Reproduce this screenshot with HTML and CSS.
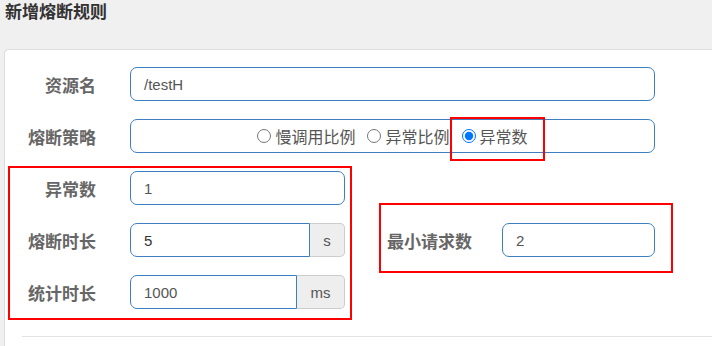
FILE: index.html
```html
<!DOCTYPE html>
<html lang="zh">
<head>
<meta charset="utf-8">
<title>新增熔断规则</title>
<link rel="stylesheet" href="styles.css">
</head>
<body>
<h4 class="title">新增熔断规则</h4>
<div class="card">
  <div class="row">
    <label class="label">资源名</label>
    <div class="field wide"><span class="value">/testH</span></div>
  </div>
  <div class="row">
    <label class="label">熔断策略</label>
    <div class="field wide radios">
      <span class="opt"><input type="radio" name="s"><span>慢调用比例</span></span>
      <span class="opt"><input type="radio" name="s"><span>异常比例</span></span>
      <span class="opt"><input type="radio" name="s" checked><span>异常数</span></span>
    </div>
  </div>
  <div class="split">
    <div class="col">
      <div class="row">
        <label class="label">异常数</label>
        <div class="field narrow"><span class="value">1</span></div>
      </div>
      <div class="row">
        <label class="label">熔断时长</label>
        <div class="group">
          <div class="field g-in g-s"><span class="value dark">5</span></div>
          <div class="addon a-s">s</div>
        </div>
      </div>
      <div class="row">
        <label class="label">统计时长</label>
        <div class="group">
          <div class="field g-in g-ms"><span class="value">1000</span></div>
          <div class="addon a-ms">ms</div>
        </div>
      </div>
    </div>
    <div class="col-right">
      <label class="label-r">最小请求数</label>
      <div class="field small"><span class="value">2</span></div>
    </div>
  </div>
  <div class="divider"></div>
  <div class="mark mark-radio"></div>
  <div class="mark mark-left"></div>
  <div class="mark mark-right"></div>
</div>
</body>
</html>
```
FILE: styles.css
```css
html, body {
  margin: 0;
  padding: 0;
  background: #f0f0f0;
  font-family: "Liberation Sans", "Noto Sans CJK SC", sans-serif;
  overflow: hidden;
  width: 712px;
  height: 346px;
}
.title {
  margin: 0;
  padding: 3px 5px 0;
  font-size: 17px;
  line-height: 20px;
  font-weight: bold;
  color: #333;
}
.card {
  position: relative;
  margin: 26px 0 0 4px;
  width: 708px;
  height: 297px;
  background: #fff;
  border: 1px solid #dcdcdc;
  border-right: none;
  border-bottom: none;
  border-radius: 5px 0 0 0;
  padding-top: 17px;
  box-sizing: border-box;
}
.row {
  display: flex;
  align-items: center;
  height: 34px;
  margin-bottom: 18px;
}
.col .row:last-child { margin-bottom: 0; }
.label {
  width: 91px;
  flex: none;
  text-align: right;
  font-size: 17px;
  font-weight: bold;
  color: #666;
  margin-right: 34px;
}
.field {
  box-sizing: border-box;
  height: 34px;
  border: 1px solid #3d7fc0;
  border-radius: 7px;
  display: flex;
  align-items: center;
  padding-left: 13px;
  font-size: 15px;
  color: #555;
  background: #fff;
}
.wide { width: 525px; }
.narrow { width: 215px; }
.small { width: 153px; }
.dark { color: #333; }
.radios {
  justify-content: center;
  padding-left: 0;
  gap: 12px;
  font-size: 16px;
}
.opt {
  display: flex;
  align-items: center;
}
.opt input {
  margin: 0 4px 0 0;
  width: 14px;
  height: 14px;
}
.group { display: flex; }
.g-in {
  border-radius: 7px 0 0 7px;
}
.g-s { width: 180px; }
.g-ms { width: 167px; }
.addon {
  box-sizing: border-box;
  height: 34px;
  background: #eee;
  border: 1px solid #ccc;
  border-left: none;
  border-radius: 0 5px 5px 0;
  display: flex;
  align-items: center;
  justify-content: center;
  font-size: 15px;
  color: #555;
}
.a-s { width: 35px; }
.a-ms { width: 48px; }
.split {
  display: flex;
  align-items: center;
}
.col-right {
  display: flex;
  align-items: center;
  margin-left: 42px;
}
.label-r {
  font-size: 17px;
  font-weight: bold;
  color: #666;
  margin-right: 30px;
}
.divider {
  margin: 27px 0 0 17px;
  height: 1px;
  background: #e3e3e3;
}
.mark {
  position: absolute;
  border: 2px solid #f00;
  box-sizing: border-box;
}
.mark-radio { left: 445px; top: 67px; width: 95px; height: 44px; }
.mark-left { left: 3px; top: 116px; width: 344px; height: 154px; }
.mark-right { left: 374px; top: 153px; width: 294px; height: 70px; }
```
